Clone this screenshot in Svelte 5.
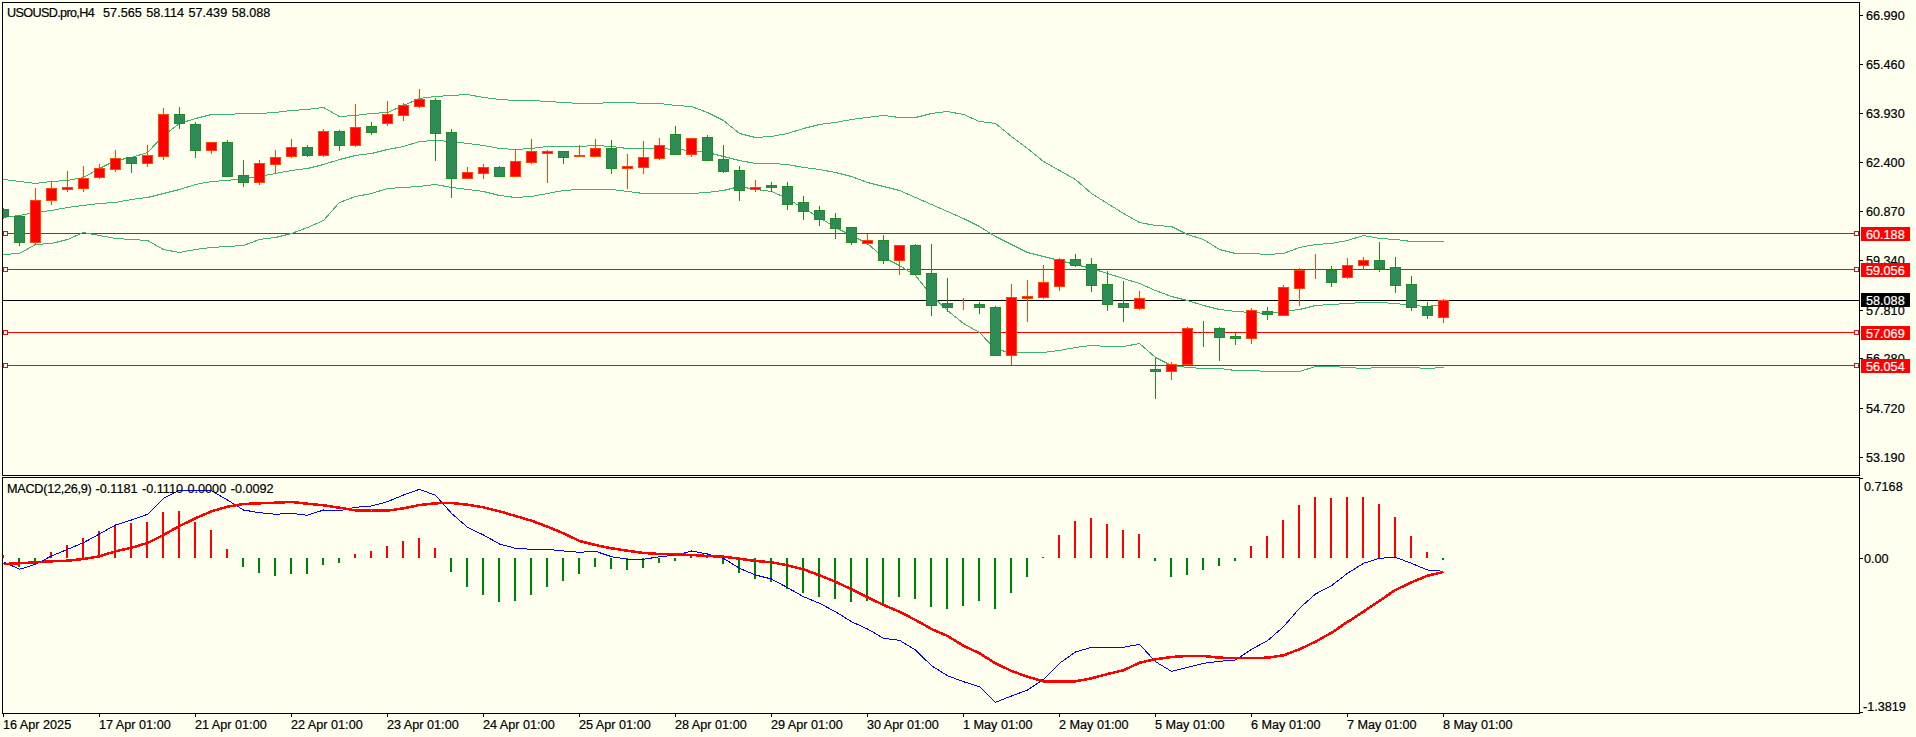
<script>
    // top wick, body top, body bottom, low wick, r = up candle (red)
    const candles = [
        [208,209,216,218,0],[215,216,242,245,0],[188,200,242,244,1],[181,188,200,204,1],[171,187,189,191,1],
        [166,178,188,191,1],[164,168,177,178,1],[150,158,169,171,1],[157,157,163,172,0],[145,155,163,166,1],
        [108,114,156,159,1],[107,114,123,128,0],[122,124,150,157,0],[142,142,150,153,1],[140,142,176,176,0],
        [160,175,182,186,0],[160,163,182,184,1],[150,157,164,172,1],[139,147,156,157,1],[145,147,155,156,0],
        [129,131,155,156,1],[130,131,145,150,0],[104,127,145,146,1],[122,126,132,134,0],[101,114,123,125,1],
        [103,105,115,120,1],[89,99,106,107,1],[98,100,133,160,0],[129,132,178,197,0],[167,172,178,178,1],
        [164,167,173,178,1],[166,167,176,176,0],[149,161,176,176,1],[139,151,162,163,1],[150,151,153,182,1],
        [151,151,157,163,0],[145,155,156,156,1],[139,148,156,156,1],[140,148,168,173,0],[154,166,168,188,1],
        [141,157,167,173,1],[138,145,158,159,1],[126,134,154,154,0],[138,138,154,156,1],[135,137,160,160,0],
        [145,159,171,172,0],[166,170,190,200,0],[180,187,189,191,1],[182,185,187,191,0],[182,186,204,209,0],
        [196,202,211,219,0],[206,210,219,225,0],[213,218,228,238,0],[227,227,242,244,0],[234,240,243,244,1],
        [235,240,260,263,0],[245,245,260,274,1],[244,245,274,274,0],[244,273,305,315,0],[278,303,307,311,0],
        [298,304,304,309,1],[302,304,307,313,0],[306,307,355,355,0],[284,297,355,364,1],[280,296,298,321,1],
        [265,282,297,298,1],[258,259,286,290,1],[254,259,265,266,0],[258,264,285,291,0],[271,284,304,310,0],
        [281,303,307,321,0],[291,298,308,309,1],[358,369,371,398,0],[362,364,371,379,1],[327,328,364,364,1],
        [321,328,328,346,0],[327,328,337,360,0],[333,336,338,344,0],[308,310,338,343,1],[307,311,314,319,0],
        [285,287,315,315,1],[268,270,288,305,1],[254,269,269,278,1],[266,270,282,286,0],[258,265,277,278,1],
        [257,260,265,269,1],[242,260,268,271,0],[257,267,285,292,0],[276,284,307,310,0],[302,306,315,318,0],
        [299,300,317,322,1]
    ];

    const upper = [179,181,183,181,180,177,168,160,157,152,135,123,118,114,114,113,113,112,110,109,107,116,115,113,112,105,98,96,95,94,97,99,100,100,101,102,103,103,102,102,103,103,105,106,112,120,133,137,136,133,128,124,122,119,117,115,117,117,113,111,114,121,123,136,148,161,170,179,193,203,213,222,225,226,234,239,249,253,253,254,253,247,244,243,240,235,238,239,241,241,241];
    const middle = [217,215,212,210,207,205,203,202,199,197,193,189,184,181,180,178,176,173,170,168,164,159,155,153,149,146,141,140,141,143,145,148,149,148,146,146,146,145,146,148,148,148,149,150,152,156,160,163,163,164,167,169,172,176,182,186,190,197,204,211,218,226,236,244,252,256,260,264,268,273,278,283,290,296,300,305,309,311,312,313,311,309,305,304,303,302,302,303,305,306,304];
    const lower = [254,253,244,243,239,232,235,238,239,240,249,252,249,247,246,245,239,237,233,227,220,202,196,193,188,187,186,184,187,189,191,195,197,196,193,190,189,189,189,191,193,193,193,193,192,190,186,189,191,198,208,217,227,235,243,257,265,275,295,310,323,332,349,352,352,352,350,347,345,346,346,343,357,365,367,368,368,370,370,371,371,371,366,366,367,368,367,367,367,368,367];

    // zoomed rows from the reference, converted to pixels below
    const hist = [255,290,280,246,225,204,183,165,159,156,126,123,156,180,237,291,309,318,312,312,285,279,252,243,228,213,204,234,306,351,375,396,393,375,351,333,312,291,297,300,294,279,273,252,258,282,309,327,336,357,369,381,387,396,393,402,381,387,411,417,408,393,417,369,321,261,195,153,144,162,180,192,273,321,315,300,288,273,228,198,150,105,81,84,81,81,102,141,198,246,270];
    const macd = [275,298,283,258,238,218,192,165,150,133,85,60,60,62,90,120,128,133,130,136,120,122,112,108,95,75,58,76,130,172,195,222,235,238,238,243,247,244,260,268,268,260,256,243,252,265,295,315,327,353,380,400,425,455,477,505,511,540,587,617,635,650,697,678,660,628,580,546,532,532,532,523,575,604,592,580,574,570,538,512,470,415,372,347,310,280,265,262,280,300,304];
    const signal = [282,280,277,274,272,267,259,244,233,219,195,168,145,124,110,102,100,98,96,101,106,113,121,122,122,115,105,100,99,104,112,124,138,152,170,190,213,225,235,242,249,252,253,255,258,260,266,273,277,286,298,316,335,358,382,405,425,450,477,498,527,550,580,603,620,634,635,634,625,612,601,578,568,561,558,558,563,564,564,563,556,538,515,488,456,425,392,360,337,317,306];

    const priceTicks = [
        ["66.990",15],["65.460",64],["63.930",113],["62.400",162],["60.870",211],
        ["59.340",260],["57.810",310],["56.280",358],["54.720",408],["53.190",457]
    ];
    const levels = [["60.188",233],["59.056",269],["57.069",332],["56.054",365]];
    const dates = ["16 Apr 2025","17 Apr 01:00","21 Apr 01:00","22 Apr 01:00","23 Apr 01:00","24 Apr 01:00","25 Apr 01:00","28 Apr 01:00","29 Apr 01:00","30 Apr 01:00","1 May 01:00","2 May 01:00","5 May 01:00","6 May 01:00","7 May 01:00","8 May 01:00"];

    const barX = (i) => 3 + 16 * i;
    const zero = 558;
    const toY = (v) => 470 + v / 3;
    const line = (arr) => arr.map((y, i) => `${barX(i) + 0.5},${y + 0.5}`).join(" ");
    const zline = (arr) => arr.map((v, i) => `${barX(i) + 0.5},${toY(v).toFixed(1)}`).join(" ");
</script>

<div class="terminal">
    <svg class="pane" width="1916" height="476" viewBox="0 0 1916 476">
        <defs>
            <clipPath id="plot"><rect x="3" y="3" width="1856" height="472"/></clipPath>
        </defs>

        {#each levels as [, y]}
            <rect class="level" x="3" {y} width="1856" height="1"/>
        {/each}
        <rect class="last" x="3" y="300" width="1856" height="1"/>

        <polyline class="band" points={line(upper)}/>
        <polyline class="band" points={line(middle)}/>
        <polyline class="band" points={line(lower)}/>

        <g clip-path="url(#plot)">
            {#each candles as [hi, top, bottom, lo, up], i}
                <rect class={up ? "wick-up" : "wick-down"} x={barX(i)} y={hi} width="1" height={lo - hi + 1}/>
                <rect class={up ? "body-up" : "body-down"} x={barX(i) - 4.5} y={top + 0.5} width="10" height={bottom - top}/>
            {/each}
        </g>

        {#each levels as [, y]}
            <rect class="handle" x="3.5" y={y - 1.5} width="4" height="4"/>
            <rect class="handle" x="1854.5" y={y - 1.5} width="4" height="4"/>
        {/each}

        <text class="label legend" x="7" y="17"><tspan class="symbol">USOUSD.pro,H4</tspan><tspan dx="9">57.565 58.114 57.439 58.088</tspan></text>

        {#each priceTicks as [text, y]}
            <rect class="axis" x="1860" {y} width="3" height="1"/>
            <text class="label" x="1866" y={y + 5}>{text}</text>
        {/each}

        {#each levels as [text, y]}
            <rect class="tag-red" x="1861" y={y - 6} width="49" height="14"/>
            <text class="label tag-text" x="1866" y={y + 6}>{text}</text>
        {/each}
        <rect class="tag-black" x="1861" y="293" width="49" height="14"/>
        <text class="label tag-text" x="1866" y="305">58.088</text>

        <rect class="axis" x="2" y="2" width="1858" height="1"/>
        <rect class="axis" x="2" y="2" width="1" height="474"/>
        <rect class="axis" x="1859" y="2" width="1" height="474"/>
        <rect class="axis" x="2" y="475" width="1858" height="1"/>
    </svg>

    <svg class="pane" width="1916" height="238" viewBox="0 476 1916 238">
        <defs>
            <clipPath id="sub"><rect x="3" y="478" width="1856" height="235"/></clipPath>
        </defs>

        <g clip-path="url(#sub)">
            {#each hist as v, i}
                {@const y = toY(v)}
                <rect class={v < 264 ? "hist-up" : "hist-down"} x={barX(i) - 1} y={Math.min(y, zero)} width="2" height={Math.abs(y - zero)}/>
            {/each}
            <polyline class="macd-line" points={zline(macd)}/>
            <polyline class="signal-line" points={zline(signal)}/>
        </g>

        <text class="label legend" x="7" y="493"><tspan class="indicator">MACD(12,26,9)</tspan><tspan dx="4">-0.1181 -0.1110 0.0000 -0.0092</tspan></text>

        <rect class="axis" x="1860" y="478" width="3" height="1"/>
        <rect class="axis" x="1860" y="558" width="3" height="1"/>
        <rect class="axis" x="1860" y="712" width="3" height="1"/>
        <text class="label" x="1864" y="491">0.7168</text>
        <text class="label" x="1864" y="563">0.00</text>
        <text class="label" x="1863" y="711">-1.3819</text>

        <rect class="axis" x="2" y="477" width="1858" height="1"/>
        <rect class="axis" x="2" y="477" width="1" height="237"/>
        <rect class="axis" x="1859" y="477" width="1" height="237"/>
        <rect class="axis" x="2" y="713" width="1858" height="1"/>
    </svg>

    <svg class="pane" width="1916" height="23" viewBox="0 714 1916 23">
        {#each dates as text, i}
            <rect class="axis" x={barX(i * 6)} y="714" width="1" height="3"/>
            <text class="label" x={barX(i * 6)} y="729">{text}</text>
        {/each}
    </svg>
</div>

<style>
    :global(body) {
        background: #fffff0;
        overflow: hidden;
    }

    .terminal {
        display: flex;
        flex-direction: column;
        width: 1916px;
        height: 737px;
        background: #fffff0;
    }

    .pane {
        display: block;
        flex: none;
        shape-rendering: crispEdges;
    }

    .label {
        font-family: "Liberation Sans", sans-serif;
        font-size: 12.65px;
        fill: #000;
        stroke: #000;
        stroke-width: 0.2px;
    }

    .legend {
        word-spacing: 1px;
    }

    .symbol {
        letter-spacing: -0.65px;
    }

    .indicator {
        letter-spacing: -0.25px;
    }

    .tag-text {
        fill: #fff;
        stroke: #fff;
    }

    .axis {
        fill: #000;
    }

    .level {
        fill: #f00;
    }

    .last {
        fill: #000;
    }

    .handle {
        fill: #fffff0;
        stroke: #d8101c;
        stroke-width: 1;
    }

    .tag-red {
        fill: #f00;
    }

    .tag-black {
        fill: #000;
    }

    .band {
        fill: none;
        stroke: #3cb371;
        stroke-width: 1;
    }

    .wick-up {
        fill: #ff4500;
    }

    .wick-down {
        fill: #228b22;
    }

    .body-up {
        fill: #f00;
        stroke: #ff4500;
        stroke-width: 1;
    }

    .body-down {
        fill: #2e8b57;
        stroke: #228b22;
        stroke-width: 1;
    }

    .hist-up {
        fill: #f00;
    }

    .hist-down {
        fill: #008000;
    }

    .macd-line {
        fill: none;
        stroke: #00f;
        stroke-width: 1;
    }

    .signal-line {
        fill: none;
        stroke: #f00;
        stroke-width: 2.5;
    }
</style>
